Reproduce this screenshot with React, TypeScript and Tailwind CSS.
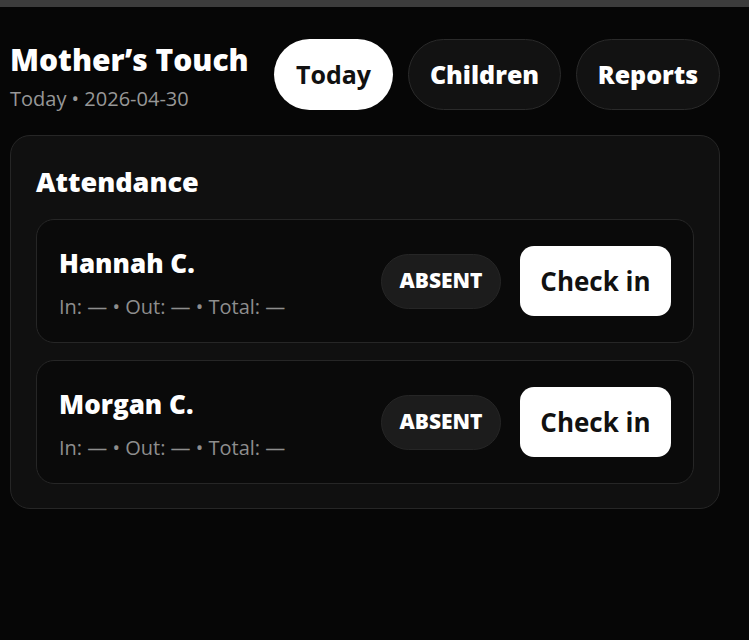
import React from "react";

const font = { fontFamily: "'Open Sans', 'Noto Sans', Arial, sans-serif" };

function Row({ name }: { name: string }) {
  return (
    <div className="flex h-[124px] items-center justify-between rounded-[18px] border border-[#262626] bg-[#0a0a0a] px-[22px]">
      <div className="mt-[4px] flex flex-col">
        <div className="text-[26px] font-extrabold leading-[32px] text-white">{name}</div>
        <div className="mt-[15px] text-[20px] leading-[26px] text-[#8e8e8e]">
          In: — • Out: — • Total: —
        </div>
      </div>
      <div className="flex items-center gap-[19px]">
        <div className="flex h-[55px] w-[120px] items-center justify-center rounded-full border border-[#262626] bg-[#1c1c1c] text-[21px] font-extrabold text-white">
          ABSENT
        </div>
        <button className="flex h-[70px] w-[151px] items-center justify-center rounded-[14px] bg-white text-[26px] font-bold text-[#111111]">
          Check in
        </button>
      </div>
    </div>
  );
}

export default function App() {
  return (
    <div className="min-h-screen bg-[#060606]" style={font}>
      <div className="h-[7px] bg-[#3c3c3c]" />
      <div className="ml-[10px] w-[710px]">
        <header className="flex items-start justify-between pt-[32px]">
          <div className="mt-[3px] flex flex-col">
            <h1 className="text-[30px] font-extrabold leading-[36px] text-white">Mother’s Touch</h1>
            <div className="mt-[10px] text-[20px] leading-[22px] text-[#979797]">Today • 2026-04-30</div>
          </div>
          <nav className="flex gap-[15px]">
            <button className="flex h-[71px] w-[119px] items-center justify-center rounded-full bg-white text-[25px] font-bold text-[#111111]">
              Today
            </button>
            <button className="flex h-[71px] w-[153px] items-center justify-center rounded-full border border-[#2a2a2a] bg-[#121212] text-[25px] font-extrabold text-white">
              Children
            </button>
            <button className="flex h-[71px] w-[144px] items-center justify-center rounded-full border border-[#2a2a2a] bg-[#121212] text-[25px] font-extrabold text-white">
              Reports
            </button>
          </nav>
        </header>
        <section className="mt-[25px] rounded-[20px] border border-[#262626] bg-[#101010] px-[25px] pb-[24px] pt-[29px]">
          <h2 className="mb-[20px] text-[27px] font-extrabold leading-[34px] text-white">Attendance</h2>
          <div className="flex flex-col gap-[17px]">
            <Row name="Hannah C." />
            <Row name="Morgan C." />
          </div>
        </section>
      </div>
    </div>
  );
}
